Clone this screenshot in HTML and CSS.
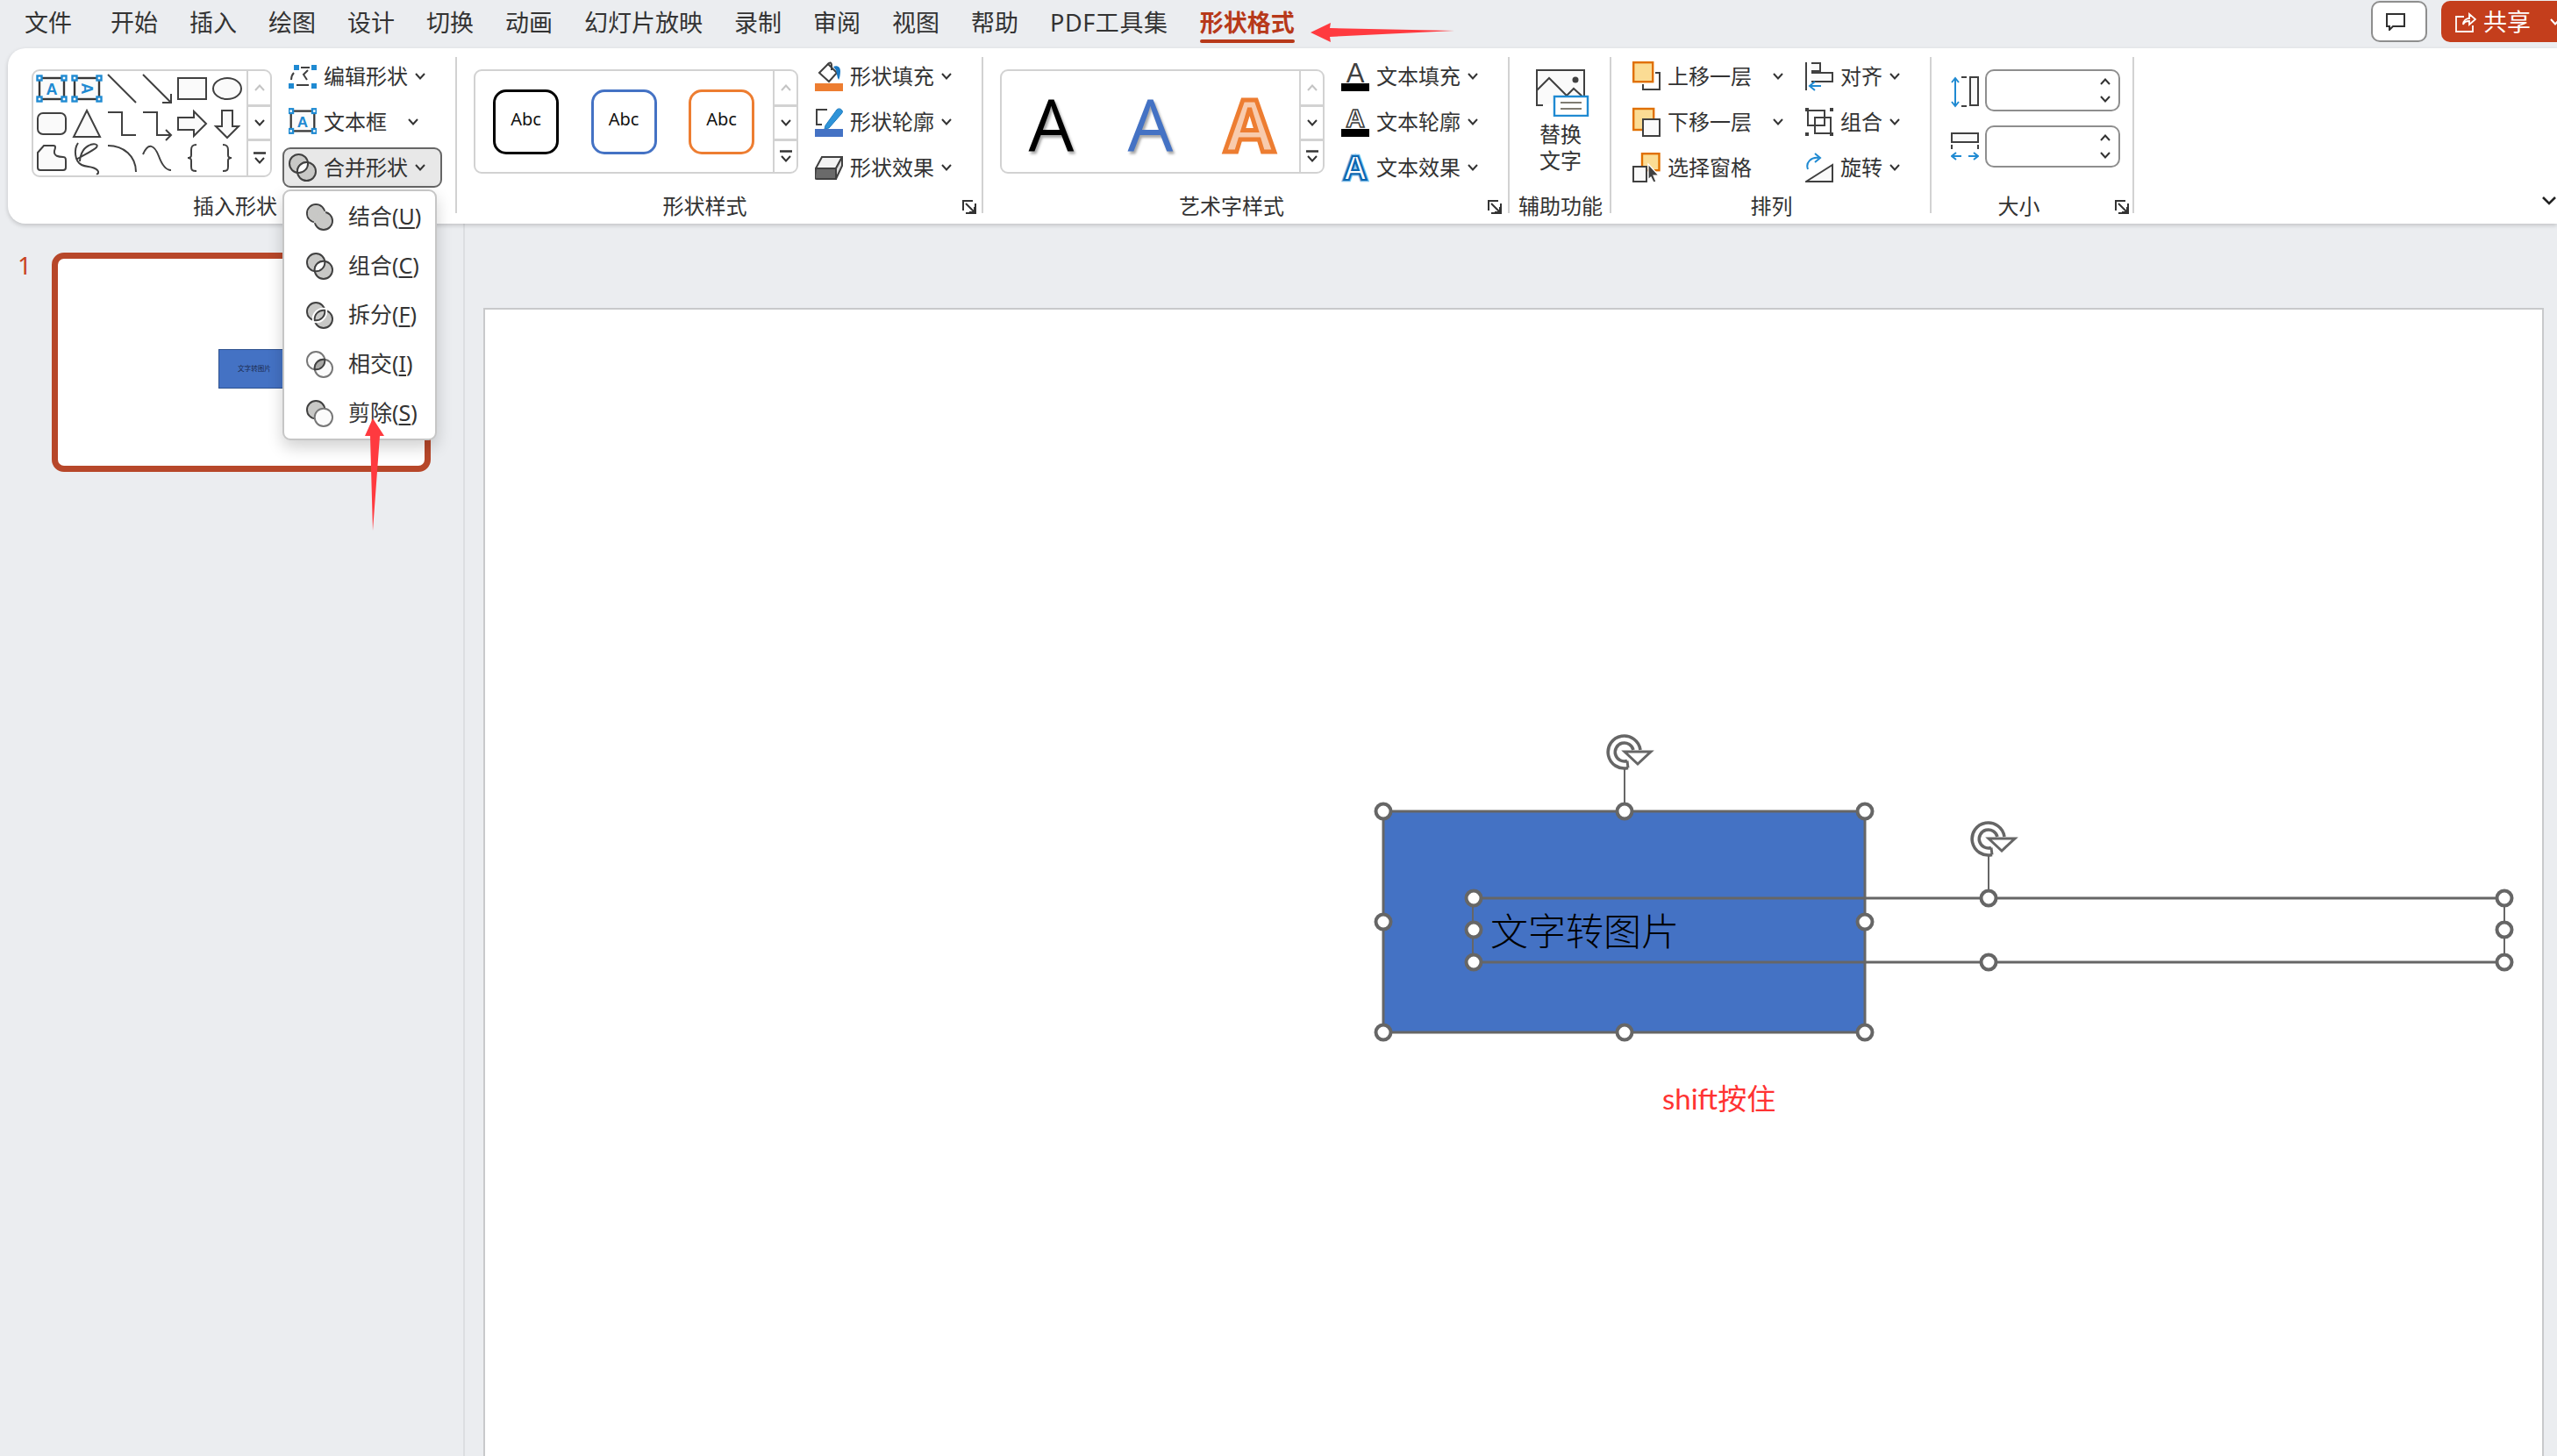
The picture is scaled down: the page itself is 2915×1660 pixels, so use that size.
FILE: index.html
```html
<!DOCTYPE html>
<html lang="zh-CN">
<head>
<meta charset="utf-8">
<title>形状格式</title>
<link rel="stylesheet" href="styles.css">
</head>
<body>
<svg class="defs" aria-hidden="true">
  <defs>
    <symbol id="chev" viewBox="0 0 12 8"><polyline points="1,1 6,6.5 11,1" fill="none" stroke="#333" stroke-width="2"/></symbol>
    <symbol id="chev-up" viewBox="0 0 12 8"><polyline points="1,7 6,1.5 11,7" fill="none" stroke="#333" stroke-width="2"/></symbol>
    <symbol id="chev-up-off" viewBox="0 0 12 8"><polyline points="1,7 6,1.5 11,7" fill="none" stroke="#c4c4c4" stroke-width="2"/></symbol>
    <symbol id="more" viewBox="0 0 14 16"><path d="M0 1.5H14" stroke="#333" stroke-width="2.4"/><polyline points="2,7 7,12.5 12,7" fill="none" stroke="#333" stroke-width="2"/></symbol>
    <symbol id="launch" viewBox="0 0 16 16"><path d="M1 12V1H12M15 4V15H4M4 4L14 14M14 8V14H8" fill="none" stroke="#333" stroke-width="2"/></symbol>

    <symbol id="g-text" viewBox="0 0 40 40">
      <rect x="6" y="8" width="28" height="24" fill="#fafafa" stroke="#383838" stroke-width="2.4"/>
      <text x="20" y="27" text-anchor="middle" font-family="Liberation Sans" font-weight="700" font-size="18" fill="#1f8ad2">A</text>
      <g fill="#fff" stroke="#1f8ad2" stroke-width="2.4"><rect x="3.5" y="5.5" width="5" height="5"/><rect x="31.5" y="5.5" width="5" height="5"/><rect x="3.5" y="29.5" width="5" height="5"/><rect x="31.5" y="29.5" width="5" height="5"/></g>
    </symbol>
    <symbol id="g-vtext" viewBox="0 0 40 40">
      <rect x="6" y="8" width="28" height="24" fill="#fafafa" stroke="#383838" stroke-width="2.4"/>
      <text transform="translate(14 20) rotate(90)" text-anchor="middle" font-family="Liberation Sans" font-weight="700" font-size="18" fill="#1f8ad2">A</text>
      <g fill="#fff" stroke="#1f8ad2" stroke-width="2.4"><rect x="3.5" y="5.5" width="5" height="5"/><rect x="31.5" y="5.5" width="5" height="5"/><rect x="3.5" y="29.5" width="5" height="5"/><rect x="31.5" y="29.5" width="5" height="5"/></g>
    </symbol>
    <symbol id="g-line" viewBox="0 0 40 40"><path d="M4 4L36 36" stroke="#404040" stroke-width="2"/></symbol>
    <symbol id="g-arrow" viewBox="0 0 40 40"><path d="M4 4L36 36M36 26V36H26" fill="none" stroke="#404040" stroke-width="2"/></symbol>
    <symbol id="g-rect" viewBox="0 0 40 40"><rect x="4" y="8" width="32" height="24" fill="#fafafa" stroke="#404040" stroke-width="2"/></symbol>
    <symbol id="g-oval" viewBox="0 0 40 40"><ellipse cx="20" cy="20" rx="16" ry="12" fill="#fafafa" stroke="#404040" stroke-width="2"/></symbol>
    <symbol id="g-round" viewBox="0 0 40 40"><rect x="4" y="8" width="32" height="24" rx="6" fill="#fafafa" stroke="#404040" stroke-width="2"/></symbol>
    <symbol id="g-tri" viewBox="0 0 40 40"><polygon points="20,5 35,35 5,35" fill="#fafafa" stroke="#404040" stroke-width="2"/></symbol>
    <symbol id="g-elbow" viewBox="0 0 40 40"><polyline points="4,7 20,7 20,33 36,33" fill="none" stroke="#404040" stroke-width="2"/></symbol>
    <symbol id="g-elbowa" viewBox="0 0 40 40"><path d="M4 7H20V33H36M30 27L36 33L30 39" fill="none" stroke="#404040" stroke-width="2"/></symbol>
    <symbol id="g-right" viewBox="0 0 40 40"><polygon points="4,13 22,13 22,6 36,20 22,34 22,27 4,27" fill="#fafafa" stroke="#404040" stroke-width="2"/></symbol>
    <symbol id="g-down" viewBox="0 0 40 40"><polygon points="14,5 26,5 26,23 33,23 20,36 7,23 14,23" fill="#fafafa" stroke="#404040" stroke-width="2"/></symbol>
    <symbol id="g-free" viewBox="0 0 40 40"><path d="M4 14L11 6H22C25 6 24 9 23 12C22 18 28 19 33 19C36 19 36 21 36 24V31C36 33 35 34 33 34H7C5 34 4 33 4 31Z" fill="#fafafa" stroke="#404040" stroke-width="2"/></symbol>
    <symbol id="g-scrib" viewBox="0 0 40 40"><path d="M10 3C5 10 6 24 14 28C20 31 27 29 32 34C34 36 33 39 31 38M8 22C14 18 27 12 31 8C34 4 27 3 22 6C14 10 12 20 12 24" fill="none" stroke="#404040" stroke-width="2"/></symbol>
    <symbol id="g-arc" viewBox="0 0 40 40"><path d="M4 6C22 6 36 18 36 36" fill="none" stroke="#404040" stroke-width="2"/></symbol>
    <symbol id="g-curve" viewBox="0 0 40 40"><path d="M4 16C10 2 17 5 22 18C26 29 30 34 36 34" fill="none" stroke="#404040" stroke-width="2"/></symbol>
    <symbol id="g-bl" viewBox="0 0 40 40"><path d="M25 5C20 5 19 7 19 11V17C19 19 17 20 15 20C17 20 19 21 19 23V30C19 34 20 35 25 35" fill="none" stroke="#404040" stroke-width="2"/></symbol>
    <symbol id="g-br" viewBox="0 0 40 40"><path d="M15 5C20 5 21 7 21 11V17C21 19 23 20 25 20C23 20 21 21 21 23V30C21 34 20 35 15 35" fill="none" stroke="#404040" stroke-width="2"/></symbol>

    <symbol id="i-edit" viewBox="0 0 32 34">
      <g fill="#1f8ad2"><rect x="6" y="4" width="6" height="6"/><rect x="26" y="4" width="6" height="6"/><rect x="0" y="25" width="6" height="6"/><rect x="26" y="25" width="6" height="6"/></g>
      <path d="M14 7H24M22 10L17 15L21 21M9 27H23M3 21C3 18 4 15 6 13" fill="none" stroke="#404040" stroke-width="2"/>
    </symbol>
    <symbol id="i-merge" viewBox="0 0 32 32">
      <circle cx="11.5" cy="11.5" r="10.5" fill="#c8c8c6" stroke="#404040" stroke-width="2"/>
      <circle cx="20.5" cy="20.5" r="10.5" fill="#c8c8c6" stroke="#404040" stroke-width="2"/>
      <path d="M21.9 10.1A10.5 10.5 0 0 1 10.1 21.9A10.5 10.5 0 0 1 21.9 10.1Z" fill="#fff" stroke="#404040" stroke-width="2"/>
    </symbol>
    <symbol id="i-union" viewBox="0 0 32 32">
      <circle cx="11.5" cy="11.5" r="10.5" fill="#c8c8c6" stroke="#404040" stroke-width="2"/>
      <circle cx="20.5" cy="20.5" r="10.5" fill="#c8c8c6" stroke="#404040" stroke-width="2"/>
      <circle cx="11.5" cy="11.5" r="9.5" fill="#c8c8c6"/>
      <path d="M21.9 10.1A10.5 10.5 0 0 1 10.1 21.9A10.5 10.5 0 0 1 21.9 10.1Z" fill="#c8c8c6" stroke="#c8c8c6" stroke-width="2"/>
    </symbol>
    <symbol id="i-frag" viewBox="0 0 32 32">
      <circle cx="11.5" cy="11.5" r="10.5" fill="#c8c8c6" stroke="#404040" stroke-width="2"/>
      <circle cx="20.5" cy="20.5" r="10.5" fill="#c8c8c6" stroke="#404040" stroke-width="2"/>
      <path d="M21.9 10.1A10.5 10.5 0 0 1 10.1 21.9A10.5 10.5 0 0 1 21.9 10.1Z" fill="#c8c8c6" stroke="#fff" stroke-width="6"/>
      <path d="M21.9 10.1A10.5 10.5 0 0 1 10.1 21.9A10.5 10.5 0 0 1 21.9 10.1Z" fill="#c8c8c6" stroke="#404040" stroke-width="2"/>
    </symbol>
    <symbol id="i-inter" viewBox="0 0 32 32">
      <circle cx="11.5" cy="11.5" r="10.5" fill="#fbfbfb" stroke="#777" stroke-width="2"/>
      <circle cx="20.5" cy="20.5" r="10.5" fill="#fbfbfb" stroke="#777" stroke-width="2"/>
      <path d="M21.9 10.1A10.5 10.5 0 0 1 10.1 21.9A10.5 10.5 0 0 1 21.9 10.1Z" fill="#a8a8a6" stroke="#404040" stroke-width="2"/>
    </symbol>
    <symbol id="i-sub" viewBox="0 0 32 32">
      <circle cx="11.5" cy="11.5" r="10.5" fill="#c8c8c6" stroke="#404040" stroke-width="2"/>
      <circle cx="20.5" cy="20.5" r="10.5" fill="#fbfbfb" stroke="#777" stroke-width="2"/>
    </symbol>
    <symbol id="i-fill" viewBox="0 0 32 34">
      <path d="M5 13L15 3L25 13L16 23Z" fill="#fff" stroke="#404040" stroke-width="2"/>
      <path d="M14 4C17 0 19 1 19 5V10" fill="none" stroke="#404040" stroke-width="2"/>
      <path d="M21 6C25 4 29 6 29 11C29 15 28 20 27 21C25 18 25 13 24 10Z" fill="#1a78c2"/>
      <rect y="25" width="32" height="9" fill="#ed7d31"/>
    </symbol>
    <symbol id="i-line" viewBox="0 0 32 34">
      <path d="M14 3H2V20H8" fill="none" stroke="#404040" stroke-width="2"/>
      <path d="M12 21L25 3C27 1 30 2 31 4C32 5 31 7 30 8L16 24L11 25Z" fill="#2e93d8" stroke="#1f7cc0"/>
      <rect y="25" width="32" height="9" fill="#4472c4"/>
    </symbol>
    <symbol id="i-eff" viewBox="0 0 32 34">
      <path d="M8 5H31L24 18H1Z" fill="#f2f2f2" stroke="#404040" stroke-width="2"/>
      <path d="M1 18H24V30H2C0 30 0 29 0 27Z" fill="#6a6a6a" stroke="#404040" stroke-width="2"/>
      <path d="M24 18L31 5V15L24 30Z" fill="#dcdcdc" stroke="#404040" stroke-width="2"/>
    </symbol>
    <symbol id="i-tfill" viewBox="0 0 32 34">
      <text x="16" y="24" text-anchor="middle" font-family="Liberation Sans" font-size="31" fill="#404040">A</text>
      <rect y="25" width="32" height="9" fill="#000"/>
    </symbol>
    <symbol id="i-tline" viewBox="0 0 32 34">
      <text x="16" y="23" text-anchor="middle" font-family="Liberation Sans" font-weight="700" font-size="30" fill="#fff" stroke="#404040" stroke-width="1.6">A</text>
      <rect y="25" width="32" height="9" fill="#000"/>
    </symbol>
    <symbol id="i-teff" viewBox="0 0 32 34">
      <text x="16" y="31" text-anchor="middle" font-family="Liberation Sans" font-weight="700" font-size="38" fill="#fff" stroke="#7dbbe8" stroke-width="4.5">A</text>
      <text x="16" y="31" text-anchor="middle" font-family="Liberation Sans" font-weight="700" font-size="38" fill="#fff" stroke="#0a66b0" stroke-width="2.2">A</text>
    </symbol>
    <symbol id="i-up" viewBox="0 0 32 34">
      <path d="M26 13H31V32H12V26" fill="none" stroke="#404040" stroke-width="2"/>
      <rect x="1.2" y="1.2" width="22" height="22" fill="#fbdc94" stroke="#e07000" stroke-width="2.4"/>
    </symbol>
    <symbol id="i-down" viewBox="0 0 32 34">
      <rect x="1.2" y="2" width="23" height="24" fill="#fbdc94" stroke="#e07000" stroke-width="2.4"/>
      <rect x="12" y="14" width="19" height="19" fill="#fafafa" stroke="#404040" stroke-width="2"/>
    </symbol>
    <symbol id="i-pane" viewBox="0 0 32 34">
      <rect x="11" y="1.2" width="19.5" height="19" fill="#fbdc94" stroke="#e07000" stroke-width="2.4"/>
      <rect x="1" y="16" width="15" height="17" fill="#fafafa" stroke="#404040" stroke-width="2"/>
      <path d="M18 13L30 26L24 26L27 33L24 34L21 28L18 31Z" fill="#404040" stroke="#fff" stroke-width="1.2"/>
    </symbol>
    <symbol id="i-align" viewBox="0 0 32 34">
      <path d="M1 1V33" stroke="#404040" stroke-width="2"/>
      <path d="M7 2H17V11H7M7 13H31V23H7" fill="#fafafa" stroke="#404040" stroke-width="2"/>
      <path d="M18 28H6M11 23L5 28L11 33" fill="none" stroke="#1f8ad2" stroke-width="2"/>
    </symbol>
    <symbol id="i-group" viewBox="0 0 32 34">
      <g fill="#404040"><rect y="1" width="4" height="4"/><rect x="28" y="1" width="4" height="4"/><rect y="29" width="4" height="4"/><rect x="28" y="29" width="4" height="4"/></g>
      <rect x="3" y="4" width="19" height="17" fill="none" stroke="#404040" stroke-width="2"/>
      <rect x="11" y="12" width="18" height="18" fill="none" stroke="#404040" stroke-width="2"/>
    </symbol>
    <symbol id="i-rot" viewBox="0 0 32 34">
      <polygon points="1,33 31,33 31,14" fill="#fafafa" stroke="#404040" stroke-width="2"/>
      <path d="M3 19C0 11 7 5 15 6M11 1L17 6L11 11" fill="none" stroke="#1f8ad2" stroke-width="2"/>
    </symbol>
    <symbol id="i-h" viewBox="0 0 32 48">
      <path d="M5 11V41M1 15L5 10L9 15M1 37L5 42L9 37" fill="none" stroke="#1f8ad2" stroke-width="2"/>
      <path d="M12 9H18M12 42H18" stroke="#404040" stroke-width="2"/>
      <rect x="22" y="9" width="9" height="32" fill="#fafafa" stroke="#404040" stroke-width="2"/>
    </symbol>
    <symbol id="i-w" viewBox="0 0 32 48">
      <rect x="1" y="9" width="30" height="10" fill="#fafafa" stroke="#404040" stroke-width="2"/>
      <path d="M1 22V27M31 22V27" stroke="#404040" stroke-width="2"/>
      <path d="M1 35H12M6 31L1 35L6 39M20 35H31M26 31L31 35L26 39" fill="none" stroke="#1f8ad2" stroke-width="2"/>
    </symbol>
    <symbol id="i-alt" viewBox="0 0 62 54">
      <path d="M9 41H2V1H56V30" fill="#fafafa" stroke="#404040" stroke-width="2"/>
      <path d="M2 24L16 10L36 30L44 22L54 31" fill="none" stroke="#404040" stroke-width="2"/>
      <circle cx="46" cy="12" r="3.5" fill="#404040"/>
      <rect x="22" y="31" width="38" height="22" fill="#fff" stroke="#1f8ad2" stroke-width="2.4"/>
      <path d="M29 38H53M29 45H53" stroke="#807c72" stroke-width="2"/>
    </symbol>
    <symbol id="i-rotate" viewBox="-22 -22 56 44">
      <path d="M4 18.5A18.5 18.5 0 1 1 18 -2" fill="none" stroke="#666" stroke-width="3.6"/>
      <path d="M3 10.5A10.5 10.5 0 1 1 10 -2" fill="none" stroke="#666" stroke-width="3.6"/>
      <path d="M4 18.5L3 10.5" stroke="#666" stroke-width="3"/>
      <polygon points="0,0 30,0 15,14" fill="#fff" stroke="#666" stroke-width="3"/>
    </symbol>
  </defs>
</svg>

<div class="app">
  <header class="topbar">
    <nav class="tabs">
      <span class="tab tab-file">文件</span>
      <span class="tab">开始</span>
      <span class="tab">插入</span>
      <span class="tab">绘图</span>
      <span class="tab">设计</span>
      <span class="tab">切换</span>
      <span class="tab">动画</span>
      <span class="tab">幻灯片放映</span>
      <span class="tab">录制</span>
      <span class="tab">审阅</span>
      <span class="tab">视图</span>
      <span class="tab">帮助</span>
      <span class="tab tab-pdf">PDF工具集</span>
      <span class="tab tab-active">形状格式</span>
    </nav>
    <div class="top-actions">
      <button class="comment-btn">
        <svg class="comment-ico" viewBox="0 0 22 20"><path d="M1 1H21V15H8L4 19V15H1Z" fill="#fff" stroke="#303030" stroke-width="2"/></svg>
      </button>
      <button class="share-btn">
        <svg class="share-ico" viewBox="0 0 24 24"><path d="M10 6H1V23H20V16M9 15C9 10 13 8 16 8V3L23 9L16 15V11C13 11 10 12 9 15Z" fill="none" stroke="#fff" stroke-width="1.8"/></svg>
        <span class="share-text">共享</span>
        <svg class="share-chev" viewBox="0 0 12 8"><polyline points="1,1 6,6.5 11,1" fill="none" stroke="#fff" stroke-width="2"/></svg>
      </button>
    </div>
  </header>

  <section class="ribbon">
    <div class="group g1">
      <div class="tools">
        <div class="gallery shapes-gallery">
          <div class="shapes">
            <svg class="gi"><use href="#g-text"/></svg><svg class="gi"><use href="#g-vtext"/></svg><svg class="gi"><use href="#g-line"/></svg><svg class="gi"><use href="#g-arrow"/></svg><svg class="gi"><use href="#g-rect"/></svg><svg class="gi"><use href="#g-oval"/></svg>
            <svg class="gi"><use href="#g-round"/></svg><svg class="gi"><use href="#g-tri"/></svg><svg class="gi"><use href="#g-elbow"/></svg><svg class="gi"><use href="#g-elbowa"/></svg><svg class="gi"><use href="#g-right"/></svg><svg class="gi"><use href="#g-down"/></svg>
            <svg class="gi"><use href="#g-free"/></svg><svg class="gi"><use href="#g-scrib"/></svg><svg class="gi"><use href="#g-arc"/></svg><svg class="gi"><use href="#g-curve"/></svg><svg class="gi"><use href="#g-bl"/></svg><svg class="gi"><use href="#g-br"/></svg>
          </div>
          <div class="scroller"><span class="sc sc1"><svg class="chev"><use href="#chev-up-off"/></svg></span><span class="sc sc2"><svg class="chev"><use href="#chev"/></svg></span><span class="sc sc3"><svg class="more"><use href="#more"/></svg></span></div>
        </div>
        <div class="cmds cmds-g1">
          <div class="cmd"><svg class="ico"><use href="#i-edit"/></svg><span>编辑形状</span><svg class="chev"><use href="#chev"/></svg></div>
          <div class="cmd"><svg class="ico"><use href="#g-text" x="-3" y="-3" width="38" height="38"/></svg><span>文本框</span><svg class="chev chev-far"><use href="#chev"/></svg></div>
          <div class="cmd cmd-open"><svg class="ico ico-merge"><use href="#i-merge"/></svg><span>合并形状</span><svg class="chev"><use href="#chev"/></svg></div>
        </div>
      </div>
      <div class="label label-g1">插入形状</div>
    </div>

    <div class="group g2">
      <div class="tools">
        <div class="gallery style-gallery">
          <div class="styles">
            <div class="abc abc-black">Abc</div>
            <div class="abc abc-blue">Abc</div>
            <div class="abc abc-orange">Abc</div>
          </div>
          <div class="scroller"><span class="sc sc1"><svg class="chev"><use href="#chev-up-off"/></svg></span><span class="sc sc2"><svg class="chev"><use href="#chev"/></svg></span><span class="sc sc3"><svg class="more"><use href="#more"/></svg></span></div>
        </div>
        <div class="cmds cmds-side">
          <div class="cmd"><svg class="ico"><use href="#i-fill"/></svg><span>形状填充</span><svg class="chev"><use href="#chev"/></svg></div>
          <div class="cmd"><svg class="ico"><use href="#i-line"/></svg><span>形状轮廓</span><svg class="chev"><use href="#chev"/></svg></div>
          <div class="cmd"><svg class="ico"><use href="#i-eff"/></svg><span>形状效果</span><svg class="chev"><use href="#chev"/></svg></div>
        </div>
      </div>
      <div class="label label-g2">形状样式</div>
      <svg class="launcher launcher-g2"><use href="#launch"/></svg>
    </div>

    <div class="group g3">
      <div class="tools">
        <div class="gallery style-gallery">
          <div class="arts">
            <span class="art art-black">A</span>
            <span class="art art-blue">A</span>
            <span class="art art-orange">A</span>
          </div>
          <div class="scroller"><span class="sc sc1"><svg class="chev"><use href="#chev-up-off"/></svg></span><span class="sc sc2"><svg class="chev"><use href="#chev"/></svg></span><span class="sc sc3"><svg class="more"><use href="#more"/></svg></span></div>
        </div>
        <div class="cmds cmds-side">
          <div class="cmd"><svg class="ico"><use href="#i-tfill"/></svg><span>文本填充</span><svg class="chev"><use href="#chev"/></svg></div>
          <div class="cmd"><svg class="ico"><use href="#i-tline"/></svg><span>文本轮廓</span><svg class="chev"><use href="#chev"/></svg></div>
          <div class="cmd"><svg class="ico"><use href="#i-teff"/></svg><span>文本效果</span><svg class="chev"><use href="#chev"/></svg></div>
        </div>
      </div>
      <div class="label label-g3">艺术字样式</div>
      <svg class="launcher launcher-g3"><use href="#launch"/></svg>
    </div>

    <div class="group g4">
      <div class="tools">
        <div class="alt-btn">
          <svg class="alt-ico"><use href="#i-alt"/></svg>
          <div class="alt-text">替换<br>文字</div>
        </div>
      </div>
      <div class="label">辅助功能</div>
    </div>

    <div class="group g5">
      <div class="tools">
        <div class="cmds cmds-arr1">
          <div class="cmd"><svg class="ico"><use href="#i-up"/></svg><span>上移一层</span><svg class="chev chev-far"><use href="#chev"/></svg></div>
          <div class="cmd"><svg class="ico"><use href="#i-down"/></svg><span>下移一层</span><svg class="chev chev-far"><use href="#chev"/></svg></div>
          <div class="cmd"><svg class="ico"><use href="#i-pane"/></svg><span>选择窗格</span></div>
        </div>
        <div class="cmds">
          <div class="cmd"><svg class="ico"><use href="#i-align"/></svg><span>对齐</span><svg class="chev"><use href="#chev"/></svg></div>
          <div class="cmd"><svg class="ico"><use href="#i-group"/></svg><span>组合</span><svg class="chev"><use href="#chev"/></svg></div>
          <div class="cmd"><svg class="ico"><use href="#i-rot"/></svg><span>旋转</span><svg class="chev"><use href="#chev"/></svg></div>
        </div>
      </div>
      <div class="label">排列</div>
    </div>

    <div class="group g6">
      <div class="tools">
        <div class="sizes">
          <div class="size-row"><svg class="size-ico"><use href="#i-h"/></svg><div class="spin"><svg class="chev"><use href="#chev-up"/></svg><svg class="chev"><use href="#chev"/></svg></div></div>
          <div class="size-row"><svg class="size-ico"><use href="#i-w"/></svg><div class="spin"><svg class="chev"><use href="#chev-up"/></svg><svg class="chev"><use href="#chev"/></svg></div></div>
        </div>
      </div>
      <div class="label label-g6">大小</div>
      <svg class="launcher launcher-g6"><use href="#launch"/></svg>
    </div>

    <svg class="collapse" viewBox="0 0 16 10"><polyline points="1,1 8,8 15,1" fill="none" stroke="#222" stroke-width="2.6"/></svg>
  </section>

  <main class="workspace">
    <aside class="panel">
      <span class="slide-num">1</span>
      <div class="thumb">
        <div class="thumb-shape">文字转图片</div>
      </div>
    </aside>
    <div class="stage">
      <div class="slide">
        <div class="shape-rect"></div>
        <div class="shape-text">文字转图片</div>
        <div class="note">shift按住</div>
        <svg class="selection" viewBox="553 353 2345 1307" preserveAspectRatio="xMinYMin meet">
          <rect class="sel-line" x="1577" y="925" width="549" height="252"/>
          <path class="sel-thin" d="M1852 877V915M2267 976V1014M1679 1034V1087M2855 1034V1087"/>
          <path class="sel-line" d="M1690 1024H2845M1690 1097H2845"/>
          <use href="#i-rotate" x="1830" y="835" width="56" height="44"/>
          <use href="#i-rotate" x="2245" y="934" width="56" height="44"/>
          <g class="handles">
            <circle cx="1577" cy="925" r="8.5"/><circle cx="1852" cy="925" r="8.5"/><circle cx="2126" cy="925" r="8.5"/>
            <circle cx="1577" cy="1051" r="8.5"/><circle cx="2126" cy="1051" r="8.5"/>
            <circle cx="1577" cy="1177" r="8.5"/><circle cx="1852" cy="1177" r="8.5"/><circle cx="2126" cy="1177" r="8.5"/>
            <circle cx="1680" cy="1024" r="8.5"/><circle cx="1680" cy="1060" r="8.5"/><circle cx="1680" cy="1097" r="8.5"/>
            <circle cx="2267" cy="1024" r="8.5"/><circle cx="2267" cy="1097" r="8.5"/>
            <circle cx="2855" cy="1024" r="8.5"/><circle cx="2855" cy="1060" r="8.5"/><circle cx="2855" cy="1097" r="8.5"/>
          </g>
        </svg>
      </div>
    </div>
  </main>

  <div class="menu">
    <div class="menu-row"><svg class="menu-ico"><use href="#i-union"/></svg><span class="menu-text">结合(<u>U</u>)</span></div>
    <div class="menu-row"><svg class="menu-ico"><use href="#i-merge"/></svg><span class="menu-text">组合(<u>C</u>)</span></div>
    <div class="menu-row"><svg class="menu-ico"><use href="#i-frag"/></svg><span class="menu-text">拆分(<u>F</u>)</span></div>
    <div class="menu-row"><svg class="menu-ico"><use href="#i-inter"/></svg><span class="menu-text">相交(<u>I</u>)</span></div>
    <div class="menu-row"><svg class="menu-ico"><use href="#i-sub"/></svg><span class="menu-text">剪除(<u>S</u>)</span></div>
  </div>

  <svg class="annotations" viewBox="0 0 2915 1660">
    <polygon points="1494,37 1517,26 1516,32 1658,35 1516,42 1517,48"/>
    <polygon points="425,477 438,497 433,497 425,605 422,497 416,497"/>
  </svg>
</div>
</body>
</html>
```

FILE: styles.css
```css
* { box-sizing: border-box; }
html, body { margin: 0; padding: 0; }
body {
  width: 2915px;
  height: 1660px;
  overflow: hidden;
  background: #ebedf0;
  color: #303030;
  font-family: "Noto Sans", "Noto Sans CJK SC", sans-serif;
}
.defs { position: absolute; width: 0; height: 0; }
.app { position: relative; width: 2915px; height: 1660px; display: flex; flex-direction: column; }

/* top bar */
.topbar { display: flex; height: 55px; padding-left: 28px; flex: none; }
.tabs { display: flex; gap: 36px; }
.tab { position: relative; font-size: 27px; line-height: 52px; height: 52px; white-space: nowrap; color: #333; }
.tab-file { margin-right: 8px; }
.tab-pdf { letter-spacing: .6px; }
.tab-active { color: #b7391a; font-weight: 700; }
.tab-active::after { content: ""; position: absolute; left: 0; right: 0; top: 45px; height: 4px; border-radius: 2px; background: #b7391a; }
.top-actions { display: flex; margin-left: auto; gap: 16px; padding-top: 1px; height: 49px; }
.comment-btn { width: 64px; height: 47px; background: #fff; border: 2px solid #8e8e8e; border-radius: 10px; padding: 0; display: flex; align-items: center; justify-content: center; }
.comment-ico { width: 22px; height: 20px; margin-right: 8px; }
.share-btn { width: 132px; height: 47px; background: #c43e1c; border: 0; border-radius: 10px 0 0 10px; color: #fff; font: inherit; font-size: 27px; line-height: 47px; padding: 0 0 0 16px; display: flex; align-items: center; gap: 8px; overflow: hidden; }
.share-text { flex: none; white-space: nowrap; }
.share-ico { width: 24px; height: 24px; flex: none; }
.share-chev { width: 12px; height: 8px; margin-left: 14px; flex: none; }

/* ribbon */
.ribbon { position: relative; z-index: 2; flex: none; display: flex; height: 200px; margin-left: 9px; padding-top: 9px; background: #fff; border-radius: 20px 0 0 20px; box-shadow: 0 2px 5px rgba(0,0,0,.18); }
.group { position: relative; flex: none; height: 188px; }
.group::after { content: ""; position: absolute; right: 0; top: 1px; height: 178px; width: 2px; background: #d2d2d2; }
.g1 { width: 512px; padding-left: 27px; }
.g2 { width: 600px; padding-left: 19px; }
.g3 { width: 600px; padding-left: 19px; }
.g4 { width: 116px; padding-left: 29px; }
.g5 { width: 365px; padding-left: 24px; }
.g6 { width: 231px; padding-left: 22px; }
.tools { display: flex; height: 154px; }
.label { position: absolute; left: 0; right: 0; top: 154px; font-size: 24px; line-height: 34px; text-align: center; color: #333; white-space: nowrap; }
.label-g1 { padding-left: 6px; }
.label-g2 { padding-right: 35px; }
.label-g3 { padding-right: 34px; }
.label-g6 { padding-right: 32px; }
.launcher { position: absolute; top: 164px; width: 16px; height: 16px; }
.launcher-g2 { right: 8px; }
.launcher-g3 { right: 9px; }
.launcher-g6 { right: 6px; }
.collapse { position: absolute; right: 1px; top: 169px; width: 16px; height: 10px; }

/* galleries */
.gallery { display: flex; margin-top: 15px; border: 2px solid #d2d2d2; border-radius: 9px; overflow: hidden; flex: none; }
.shapes-gallery { width: 274px; height: 123px; }
.style-gallery { width: 370px; height: 119px; }
.shapes { display: grid; grid-template-columns: repeat(6, 40px); grid-auto-rows: 39.67px; padding-left: 1px; }
.gi { width: 40px; height: 40px; display: block; }
.scroller { margin-left: auto; width: 27px; flex: none; display: flex; flex-direction: column; gap: 3px; background: #d2d2d2; padding-left: 2px; }
.sc { background: #fff; display: flex; align-items: center; justify-content: center; }
.sc1 { height: 38px; }
.sc2 { height: 36px; }
.sc3 { flex: 1; }
.chev { width: 12px; height: 8px; flex: none; }
.chev-far { margin-left: 16px; }
.more { width: 14px; height: 16px; }

.styles { display: flex; gap: 36.5px; padding: 21px 0 0 20px; }
.abc { width: 75px; height: 74px; border-radius: 15px; border: 3px solid #000; font-size: 20px; line-height: 62px; text-align: center; color: #111; background: #fff; }
.abc-blue { border-color: #4472c4; }
.abc-orange { border-color: #ed7d31; }
.arts { display: flex; }
.art { width: 113px; font-family: "Open Sans", "Noto Sans", sans-serif; font-size: 82px; line-height: 120px; text-align: center; color: #000; text-shadow: 2px 3px 3px rgba(0,0,0,.35); }
.art-blue { color: #4472c4; }
.art-orange { color: #f8cbad; font-weight: 700; -webkit-text-stroke: 5px #ed7d31; text-shadow: none; }

/* commands */
.cmds { display: flex; flex-direction: column; gap: 6px; flex: none; }
.cmds-g1 { margin-left: 12px; }
.cmds-g1 .cmd { width: 182px; padding-left: 5px; border: 2px solid transparent; border-radius: 9px; }
.cmds-g1 .cmd-open { background: #e8e8e8; border-color: #666; }
.cmds-side { margin-left: 19px; }
.cmds-arr1 { width: 197px; }
.cmd { display: flex; align-items: center; gap: 8px; height: 46px; font-size: 24px; line-height: 46px; white-space: nowrap; color: #333; }
.ico { width: 32px; height: 34px; flex: none; }
.ico-merge { height: 32px; }

.alt-btn { margin-top: 15px; width: 62px; display: flex; flex-direction: column; }
.alt-ico { width: 62px; height: 54px; flex: none; }
.alt-text { width: 58px; margin-top: 5px; font-size: 24px; line-height: 30px; text-align: center; color: #333; }

.sizes { margin-top: 15px; display: flex; flex-direction: column; gap: 16px; }
.size-row { display: flex; gap: 7px; }
.size-ico { width: 32px; height: 48px; flex: none; }
.spin { width: 154px; height: 48px; border: 2px solid #8e8e8e; border-radius: 10px; background: #fff; display: flex; flex-direction: column; align-items: flex-end; justify-content: center; gap: 12px; padding-right: 9px; }

/* workspace */
.workspace { flex: 1; display: flex; min-height: 0; }
.panel { width: 530px; flex: none; display: flex; align-items: flex-start; padding: 33px 0 0 20px; gap: 29px; border-right: 2px solid #dcdee1; }
.slide-num { width: 10px; font-size: 28px; line-height: 28px; color: #c8421e; }
.thumb { position: relative; width: 432px; height: 250px; background: #fff; border: 7px solid #b7472a; border-radius: 14px; }
.thumb-shape { position: absolute; left: 183px; top: 103px; width: 165px; height: 45px; padding-left: 21px; background: #4472c4; border: 1px solid #2f528f; font-size: 7.6px; line-height: 43px; color: #1c2c50; white-space: nowrap; }
.stage { flex: 1; min-width: 0; padding: 96px 15px 0 21px; }
.slide { position: relative; height: 100%; background: #fff; border: 2px solid #c8c9cb; border-bottom: 0; }
.shape-rect { position: absolute; left: 1024px; top: 572px; width: 549px; height: 252px; background: #4472c4; }
.shape-text { position: absolute; left: 1146px; top: 676px; font-size: 43px; line-height: 60px; font-weight: 300; color: #000; white-space: nowrap; font-family: "Noto Sans CJK SC", sans-serif; }
.note { position: absolute; left: 1342px; top: 877px; font-family: Lato, "Noto Sans CJK SC", sans-serif; font-size: 33px; line-height: 44px; color: #ff3333; white-space: nowrap; }
.selection { position: absolute; left: 0; top: 0; width: 2345px; height: 1307px; }
.sel-line { fill: none; stroke: #666; stroke-width: 3; }
.sel-thin { fill: none; stroke: #666; stroke-width: 2; }
.handles circle { fill: #fff; stroke: #666; stroke-width: 4; }

/* merge menu */
.menu { position: absolute; z-index: 3; left: 322px; top: 216px; width: 176px; height: 286px; padding-top: 1px; background: #fff; border: 2px solid #c6c6c6; border-radius: 9px; box-shadow: 0 8px 18px rgba(0,0,0,.18); }
.menu-row { display: flex; align-items: center; height: 56px; padding-left: 25px; gap: 17px; font-size: 25px; line-height: 34px; white-space: nowrap; color: #333; }
.menu-text { margin-top: -2px; }
.menu-ico { width: 31px; height: 31px; flex: none; }
.menu-row u { text-underline-offset: 3px; }

.annotations { position: absolute; z-index: 4; left: 0; top: 0; width: 2915px; height: 1660px; pointer-events: none; fill: #ff3a3f; }
```
